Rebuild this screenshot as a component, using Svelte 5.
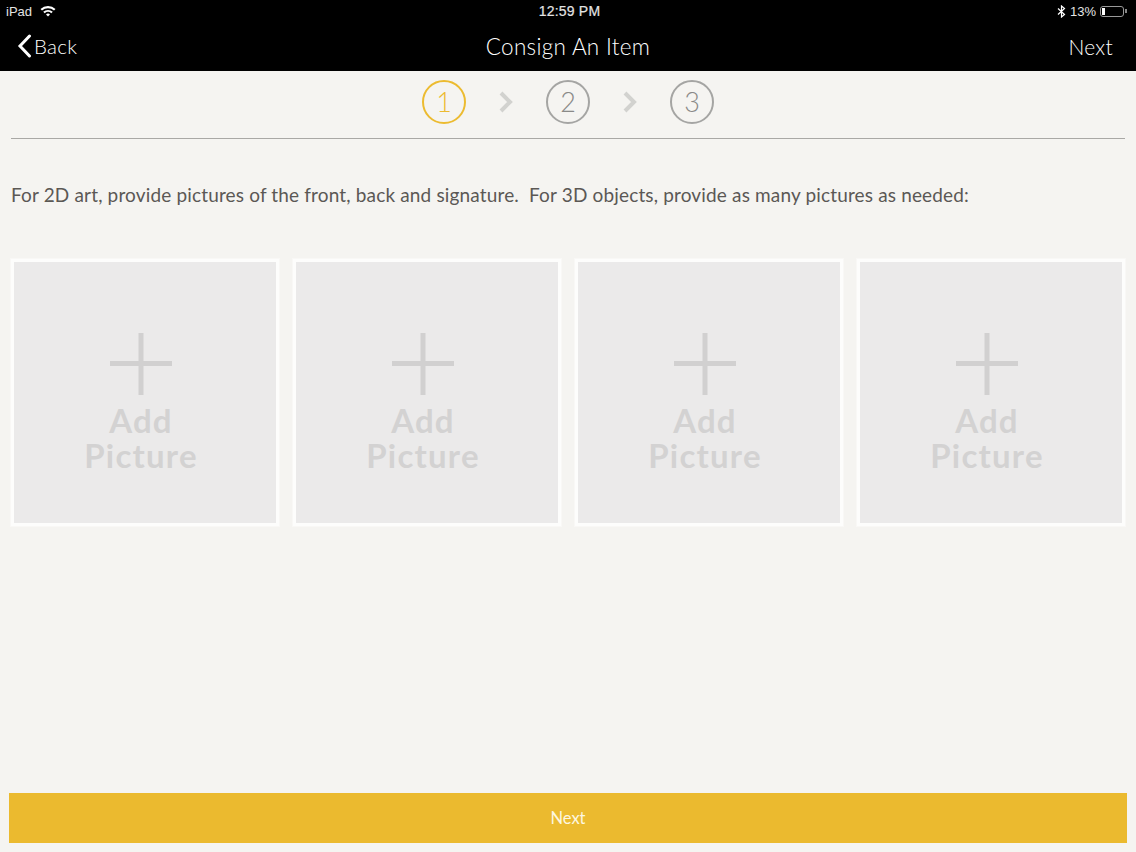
<script>
  const steps = [1, 2, 3];
  const tiles = [1, 2, 3, 4];
</script>

<div class="screen">
  <header>
    <div class="status">
      <div class="status-left">
        <span>iPad</span>
        <svg class="wifi" width="16" height="12" viewBox="0 0 16 12">
          <path d="M0.5 4 A11 11 0 0 1 15.5 4 L14 5.6 A9 9 0 0 0 2 5.6 Z" fill="#fff" />
          <path d="M3.2 6.8 A7 7 0 0 1 12.8 6.8 L11.3 8.3 A5 5 0 0 0 4.7 8.3 Z" fill="#fff" />
          <path d="M6 9.5 A3 3 0 0 1 10 9.5 L8 11.6 Z" fill="#fff" />
        </svg>
      </div>
      <div class="clock">12:59 PM</div>
      <div class="status-right">
        <svg width="9" height="13" viewBox="0 0 9 13">
          <path d="M1 3.5 L7.5 9.5 L4.5 12 V1 L7.5 3.5 L1 9.5" fill="none" stroke="#fff" stroke-width="1.2" />
        </svg>
        <span>13%</span>
        <div class="battery"><div class="charge"></div></div>
        <div class="nub"></div>
      </div>
    </div>
    <nav>
      <div class="back">
        <svg width="15" height="24" viewBox="0 0 15 24">
          <path d="M12.5 2 L3 12 L12.5 22" fill="none" stroke="#fff" stroke-width="3" stroke-linecap="round" />
        </svg>
        <span>Back</span>
      </div>
      <div class="title">Consign An Item</div>
      <div class="next">Next</div>
    </nav>
  </header>

  <main>
    <div class="steps">
      {#each steps as step, i}
        {#if i > 0}
          <svg class="chevron" width="16" height="22" viewBox="0 0 16 22">
            <path d="M3 2 L12 11 L3 20" fill="none" stroke="#d2d2cf" stroke-width="4" />
          </svg>
        {/if}
        <div class="step" class:active={i === 0}>{step}</div>
      {/each}
    </div>

    <p class="hint">For 2D art, provide pictures of the front, back and signature.&nbsp; For 3D objects, provide as many pictures as needed:</p>

    <div class="tiles">
      {#each tiles as tile}
        <div class="tile">
          <svg width="62" height="62" viewBox="0 0 62 62">
            <rect x="0" y="28" width="62" height="5" fill="#d1d0d0" />
            <rect x="28.500" y="0" width="5" height="62" fill="#d1d0d0" />
          </svg>
          <div class="label">Add<br />Picture</div>
        </div>
      {/each}
    </div>

    <button class="submit">Next</button>
  </main>
</div>

<style>
  :global(body) {
    background: #f5f4f1;
  }

  .screen {
    display: flex;
    flex-direction: column;
    height: 852px;
    font-family: Lato, "Open Sans", sans-serif;
    overflow: hidden;
  }

  header {
    height: 71px;
    background: #000;
    color: #fff;
  }

  .status {
    display: grid;
    grid-template-columns: 1fr auto 1fr;
    align-items: center;
    height: 22px;
    padding: 0 9px 0 6px;
    font-family: "Liberation Sans", sans-serif;
    font-size: 13px;
    color: #e4e4e4;
  }

  .clock {
    margin-left: 6px;
    font-size: 14px;
    letter-spacing: 0.2px;
    -webkit-text-stroke: 0.2px #e4e4e4;
  }

  .status-left {
    display: flex;
    align-items: center;
    gap: 8px;
  }

  .status-right {
    display: flex;
    align-items: center;
    justify-content: flex-end;
    gap: 4px;
  }

  .battery {
    width: 24px;
    height: 11px;
    padding: 1px;
    box-sizing: border-box;
    border: 1px solid #999;
    border-radius: 3px;
  }

  .charge {
    width: 3px;
    height: 100%;
    background: #fff;
  }

  .nub {
    width: 2px;
    height: 4px;
    margin-left: -3px;
    background: #888;
  }

  nav {
    position: relative;
    display: flex;
    justify-content: space-between;
    align-items: center;
    height: 48px;
    padding: 0 23px 0 17px;
    font-size: 20.5px;
    font-weight: 300;
    letter-spacing: 0.3px;
  }

  .back {
    display: flex;
    align-items: center;
    gap: 2px;
  }

  .next {
    font-size: 21px;
  }

  .title {
    position: absolute;
    left: 0;
    right: 0;
    font-size: 22.5px;
    text-align: center;
    pointer-events: none;
  }

  main {
    flex: 1;
    display: flex;
    flex-direction: column;
    padding: 0 11px;
  }

  .steps {
    display: flex;
    justify-content: center;
    align-items: center;
    gap: 33px;
    height: 61px;
    padding-bottom: 6px;
    border-bottom: 1px solid #a9a8a5;
  }

  .chevron {
    margin: 0 -1px;
  }

  .step {
    display: flex;
    justify-content: center;
    align-items: center;
    width: 44px;
    height: 44px;
    box-sizing: border-box;
    border: 2px solid #a5a5a3;
    border-radius: 50%;
    font-size: 27px;
    font-weight: 300;
    color: #8a8a88;
  }

  .step.active {
    border-color: #ecbb30;
    color: #ecbb30;
  }

  .hint {
    margin: 43px 0 0;
    font-size: 19px;
    line-height: 26px;
    letter-spacing: 0.155px;
    font-weight: 400;
    color: #5b5855;
  }

  .tiles {
    display: grid;
    grid-template-columns: repeat(4, 268px);
    gap: 14px;
    margin-top: 51px;
  }

  .tile {
    display: flex;
    flex-direction: column;
    align-items: center;
    box-sizing: border-box;
    height: 267px;
    padding: 71px 8px 0 0;
    background: #ebeaea;
    border: 3px solid #fdfdfc;
    box-shadow: 0 0 0 1px #f9f8f6;
  }

  .label {
    margin-top: 8px;
    font-size: 33px;
    line-height: 35px;
    letter-spacing: 1.2px;
    font-weight: 700;
    text-align: center;
    color: #d3d2d2;
  }

  .submit {
    display: block;
    height: 50px;
    margin: auto -2px 9px;
    padding-bottom: 1px;
    border: none;
    background: #ebba2f;
    color: #fdf7e0;
    font-family: inherit;
    font-size: 16.5px;
  }
</style>
